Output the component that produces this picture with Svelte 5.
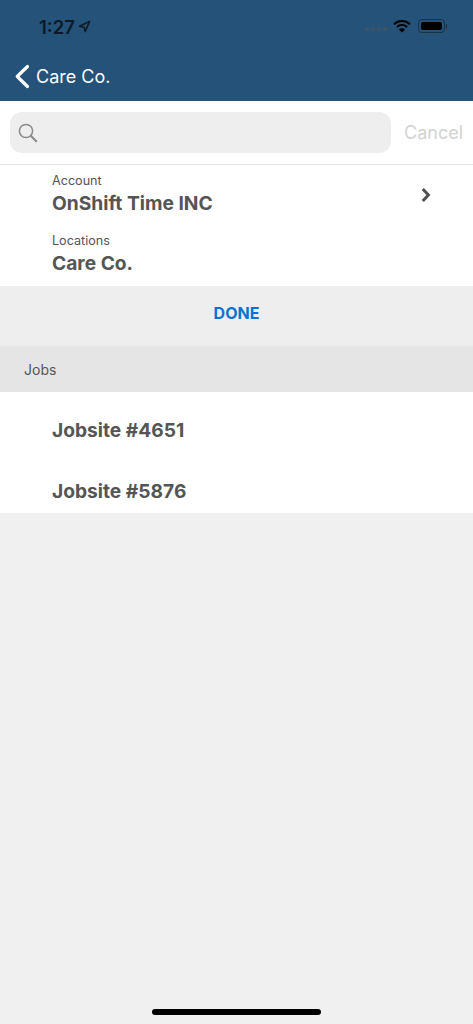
<script>
  const jobs = ["Jobsite #4651", "Jobsite #5876"];
  const signal = [0, 1, 2, 3];
</script>

<div class="screen">
  <header>
    <div class="status">
      <div class="time">
        <span>1:27</span>
        <svg width="13" height="13" viewBox="0 0 13 13">
          <path d="M1.5 6.2 11.6 1.4 7.2 11.6 6.1 7.3Z" fill="none" stroke="#0b1a26" stroke-width="1.5" stroke-linejoin="round" />
        </svg>
      </div>
      <div class="indicators">
        <div class="dots">
          {#each signal as s}
            <i></i>
          {/each}
        </div>
        <svg class="wifi" width="18" height="14" viewBox="0 0 18 14">
          <path d="M1 5.2C5.6 .9 12.4 .9 17 5.2" fill="none" stroke="#000" stroke-width="2" />
          <path d="M3.9 8C6.9 5.3 11.1 5.3 14.1 8" fill="none" stroke="#000" stroke-width="2" />
          <path d="M9 13.6 5.9 10.4C7.7 8.9 10.3 8.9 12.1 10.4Z" fill="#000" />
        </svg>
        <div class="battery"><b></b></div>
        <div class="nub"></div>
      </div>
    </div>
    <div class="nav">
      <svg width="16" height="25" viewBox="0 0 16 25">
        <path d="M13.5 2.5 3.2 12.5 13.5 22.5" fill="none" stroke="#fff" stroke-width="3.2" stroke-linecap="round" stroke-linejoin="round" />
      </svg>
      <span>Care Co.</span>
    </div>
  </header>

  <div class="search">
    <div class="field">
      <svg width="20" height="20" viewBox="0 0 20 20">
        <circle cx="8" cy="8" r="6.6" fill="none" stroke="#8a8a8a" stroke-width="1.5" />
        <path d="M12.8 12.8 18.2 18.2" stroke="#8a8a8a" stroke-width="2" stroke-linecap="round" />
      </svg>
    </div>
    <span class="cancel">Cancel</span>
  </div>

  <section class="selected">
    <div class="row">
      <div>
        <div class="label">Account</div>
        <div class="value">OnShift Time INC</div>
      </div>
      <svg class="chevron" width="10" height="16" viewBox="0 0 10 16">
        <path d="M1.8 2 7.4 8 1.8 14" fill="none" stroke="#4f4f4f" stroke-width="3" />
      </svg>
    </div>
    <div class="location">
      <div class="label">Locations</div>
      <div class="value">Care Co.</div>
    </div>
  </section>

  <div class="done">DONE</div>

  <div class="heading">Jobs</div>

  <ul>
    {#each jobs as job}
      <li>{job}</li>
    {/each}
  </ul>

  <div class="home"></div>
</div>

<style>
  :global(body) {
    background: #f0f0f0;
  }

  .screen {
    position: relative;
    height: 1024px;
    background: #f0f0f0;
    font-family: Inter, "Liberation Sans", sans-serif;
    color: #555;
    overflow: hidden;
  }

  header {
    height: 101px;
    background: #245278;
  }

  .status {
    height: 53px;
    display: flex;
    justify-content: space-between;
    padding: 0 26px 0 39px;
  }

  .time {
    display: flex;
    align-items: center;
    gap: 3px;
    height: 53px;
    font-size: 18.5px;
    font-weight: 600;
    color: #0b1a26;
  }

  .indicators {
    display: flex;
    align-items: center;
    height: 53px;
  }

  .dots {
    display: flex;
    gap: 2px;
    margin: 4px 7px 0 0;
  }

  .dots i {
    width: 4px;
    height: 4px;
    border-radius: 50%;
    background: #3d5468;
  }

  .wifi {
    margin: -2px 7px 0 -1px;
  }

  .battery {
    width: 27px;
    height: 14px;
    box-sizing: border-box;
    margin-top: -1px;
    padding: 2px;
    border: 1px solid #16334c;
    border-radius: 4px;
  }

  .battery b {
    display: block;
    height: 100%;
    background: #000;
    border-radius: 2px;
  }

  .nub {
    width: 1px;
    height: 5px;
    margin: -1px 0 0 1px;
    background: #16334c;
  }

  .nav {
    display: flex;
    align-items: center;
    gap: 6px;
    padding-left: 14px;
    height: 46px;
    color: #fff;
    font-size: 18px;
  }

  .search {
    height: 63px;
    display: flex;
    align-items: center;
    gap: 13px;
    padding: 0 10px;
    background: #fff;
    border-bottom: 1px solid #e4e4e4;
  }

  .field {
    width: 381px;
    height: 41px;
    flex: none;
    display: flex;
    align-items: center;
    padding-left: 8px;
    box-sizing: border-box;
    background: #eeeeee;
    border-radius: 12px;
  }

  .cancel {
    font-size: 18px;
    color: #d2d2d2;
  }

  .selected {
    height: 121px;
    padding-left: 52px;
    background: #fff;
  }

  .row {
    display: flex;
    justify-content: space-between;
    align-items: center;
    padding-right: 42px;
  }

  .chevron {
    margin-top: 10px;
  }

  .label {
    padding-top: 8px;
    font-size: 12.6px;
    line-height: 16px;
  }

  .value {
    margin-top: 2px;
    font-size: 19.2px;
    line-height: 24px;
    font-weight: 700;
  }

  .location {
    margin-top: 10px;
  }

  .done {
    height: 60px;
    line-height: 54px;
    text-align: center;
    background: #eeeeee;
    color: #0a72d2;
    font-size: 16px;
    font-weight: 700;
  }

  .heading {
    height: 46px;
    line-height: 47px;
    padding-left: 24px;
    background: #e5e5e5;
    font-size: 14px;
  }

  ul {
    list-style: none;
    margin: 0;
    padding: 8px 0 0 52px;
    height: 121px;
    box-sizing: border-box;
    background: #fff;
  }

  li {
    height: 61px;
    line-height: 60px;
    font-size: 19.2px;
    font-weight: 700;
  }

  .home {
    position: absolute;
    left: 152px;
    bottom: 9px;
    width: 169px;
    height: 6px;
    border-radius: 3px;
    background: #000;
  }
</style>
